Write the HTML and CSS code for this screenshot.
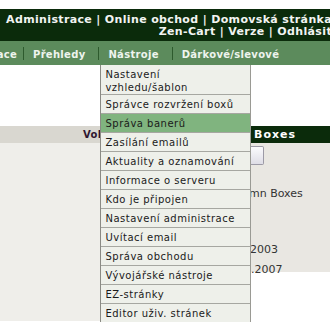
FILE: index.html
```html
<!DOCTYPE html>
<html lang="cs">
<head>
<meta charset="utf-8">
<title>Zen-Cart administrace</title>
<link rel="stylesheet" href="styles.css">
</head>
<body>
<div class="page">
  <header class="top">
    <div class="links">
      <div class="line">Administrace | Online obchod | Domovská stránka</div>
      <div class="line">Zen-Cart | Verze | Odhlásit</div>
    </div>
  </header>
  <nav class="menu">
    <div class="item first"><span>Lokalizace</span></div>
    <i class="sep"></i>
    <div class="item">Přehledy</div>
    <i class="sep"></i>
    <div class="item tools">Nástroje
      <ul class="dropdown">
        <li class="two">Nastavení<br>vzhledu/šablon</li>
        <li>Správce rozvržení boxů</li>
        <li class="hover">Správa banerů</li>
        <li>Zasílání emailů</li>
        <li>Aktuality a oznamování</li>
        <li>Informace o serveru</li>
        <li>Kdo je připojen</li>
        <li>Nastavení administrace</li>
        <li>Uvítací email</li>
        <li>Správa obchodu</li>
        <li>Vývojářské nástroje</li>
        <li>EZ-stránky</li>
        <li>Editor uživ. stránek</li>
      </ul>
    </div>
    <i class="sep"></i>
    <div class="item">Dárkové/slevové</div>
  </nav>
  <div class="blank"></div>
  <div class="grid">
    <div class="th th-left">Volby</div>
    <div class="th th-right">Boxes</div>
    <div class="td-left"></div>
    <div class="td-right">
      <div class="panel">
        <div class="btn"></div>
        <div class="txt boxes">mn Boxes</div>
        <div class="txt y1">2003</div>
        <div class="txt y2">2.2007</div>
      </div>
    </div>
  </div>
</div>
</body>
</html>
```
FILE: styles.css
```css
html, body {
  margin: 0;
  padding: 0;
  background: #ffffff;
}
.page {
  width: 330px;
  height: 322px;
  overflow: hidden;
  position: relative;
  padding-top: 9px;
  box-sizing: border-box;
  font-family: "DejaVu Sans", Verdana, sans-serif;
}
.top {
  background: #0b2b0b;
  height: 32px;
  box-sizing: border-box;
  padding-top: 5px;
  display: flex;
  justify-content: flex-end;
}
.links {
  flex: none;
  width: 332px;
  margin-right: -2px;
  text-align: right;
  color: #f2f4f2;
  font-weight: bold;
  font-size: 11px;
  line-height: 12px;
  letter-spacing: 0.35px;
  white-space: nowrap;
}
.menu {
  background: #5c8b5c;
  height: 24px;
  display: flex;
  align-items: stretch;
  color: #eef4ee;
  font-weight: bold;
  font-size: 10px;
  letter-spacing: 0.3px;
  white-space: nowrap;
  position: relative;
  z-index: 2;
}
.item {
  display: flex;
  align-items: center;
  padding: 2px 13px 0 9px;
  position: relative;
}
.item.first {
  width: 17px;
  padding: 2px 6px 0 0;
  overflow: hidden;
  justify-content: flex-end;
}
.sep {
  display: block;
  width: 1px;
  background: #2d5a2d;
  margin: 6px 0 5px;
}
.dropdown {
  list-style: none;
  margin: 0;
  padding: 0;
  position: absolute;
  top: 24px;
  left: 1px;
  width: 149px;
  background: #eef0ea;
  border-left: 1px solid #8a8a84;
  border-right: 1px solid #9a9a94;
  color: #1a1a1a;
  font-weight: normal;
  font-size: 10px;
  letter-spacing: 0.5px;
}
.dropdown li {
  padding: 3px 4px 2px 4px;
  line-height: 13px;
  border-bottom: 1px solid #a6a7a1;
}
.dropdown li.two {
  padding-bottom: 0;
}
.dropdown li.hover {
  background: #80b47f;
}
.blank {
  height: 61px;
}
.grid {
  display: grid;
  grid-template-columns: 250px 80px;
  grid-template-rows: 17px 178px;
}
.th {
  font-weight: bold;
  font-size: 11px;
  letter-spacing: 1px;
  line-height: 17px;
  white-space: nowrap;
  overflow: hidden;
}
.th-left {
  background: #d9d7d0;
  color: #2e1630;
  padding-left: 83px;
  font-size: 10px;
  letter-spacing: 0.4px;
}
.th-right {
  background: #0b2b0b;
  color: #ffffff;
  padding-left: 4px;
}
.td-left {
  background: #efeeea;
}
.td-right {
  background: #ffffff;
}
.panel {
  background: #e9e7e2;
  height: 129px;
  padding-top: 3px;
  box-sizing: border-box;
  color: #333333;
  font-size: 11px;
  white-space: nowrap;
}
.btn {
  width: 13px;
  height: 19px;
  box-sizing: border-box;
  margin-left: 1px;
  border: 1px solid #9c9aa6;
  border-left: none;
  border-radius: 0 2px 2px 0;
  background: linear-gradient(#fbfbfd, #dedde6);
}
.txt {
  line-height: 14px;
}
.boxes {
  margin-top: 22px;
  margin-left: -1px;
}
.y1 {
  margin-top: 42px;
}
.y2 {
  margin-top: 6px;
  margin-left: -6px;
}
```
